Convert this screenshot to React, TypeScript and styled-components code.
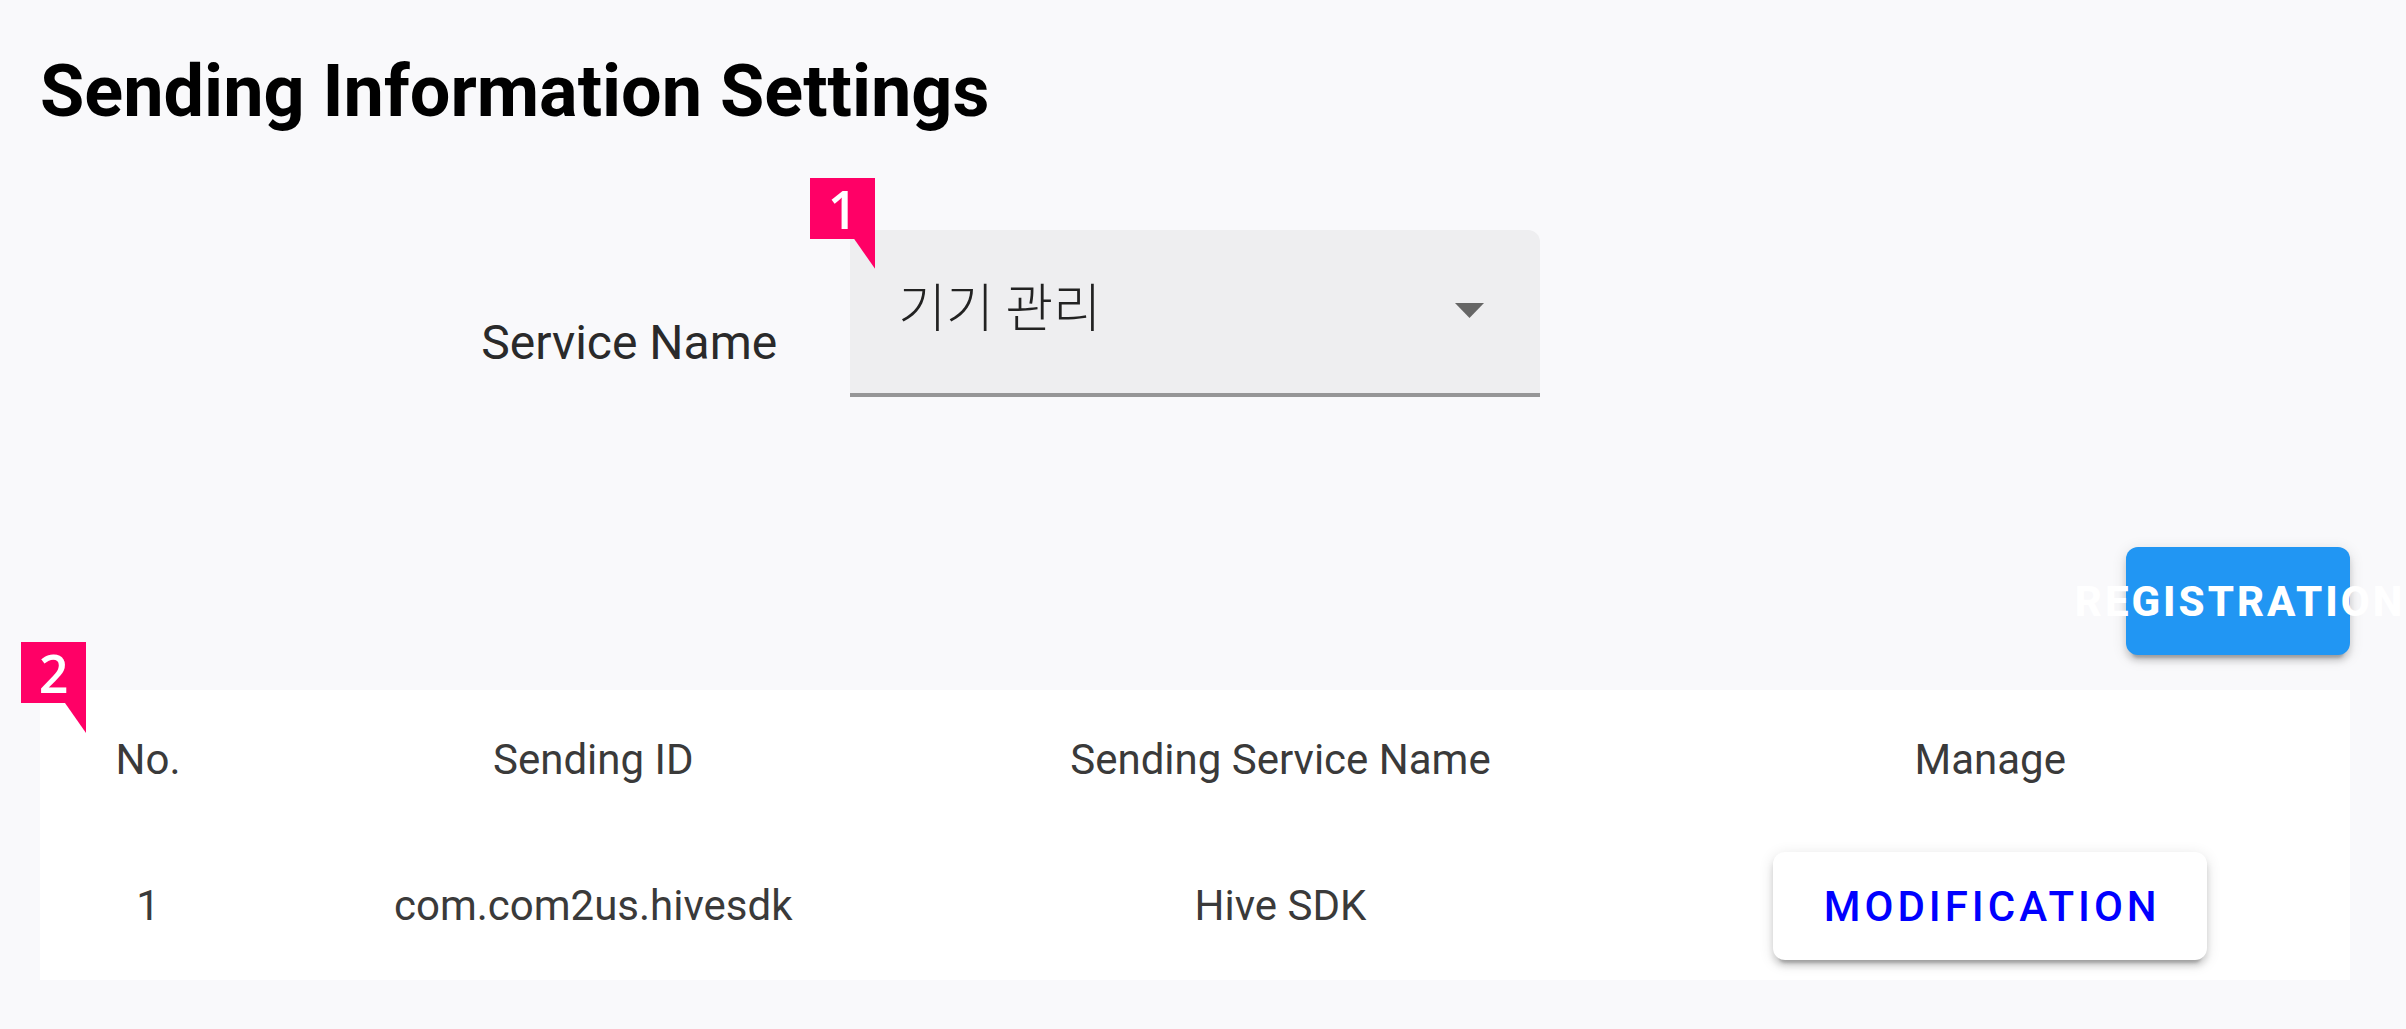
import React, { useState } from "react";
import styled, { createGlobalStyle } from "styled-components";

const GlobalStyle = createGlobalStyle`
  *, *::before, *::after { box-sizing: border-box; }
  body {
    margin: 0;
    background: #f9f9fb;
    color: #000;
    font-family: Roboto, "Noto Sans CJK KR", sans-serif;
  }
`;

const Page = styled.main`
  padding: 42px 56px 50px 40px;
`;

const Title = styled.h1`
  margin: 0;
  font-size: 72px;
  line-height: 100px;
  font-weight: 700;
`;

const FilterRow = styled.form`
  display: grid;
  grid-template-columns: 32% 690px;
  column-gap: 71px;
  align-items: end;
  margin-top: 88px;
`;

const FieldLabel = styled.label`
  padding: 0 2px 26px 0;
  text-align: right;
  font-size: 48px;
  line-height: 56px;
  color: #2a2a2a;
`;

const SelectBox = styled.div`
  position: relative;
  display: flex;
  align-items: center;
`;

const Select = styled.select`
  appearance: none;
  width: 100%;
  height: 167px;
  margin: 0;
  padding: 0 120px 14px 48px;
  border: 0;
  border-bottom: 4px solid #969697;
  border-radius: 12px 12px 0 0;
  background: #eeeef0;
  color: #222;
  font-family: "Noto Sans CJK KR", sans-serif;
  font-size: 52px;
  font-weight: 300;
`;

const Arrow = styled.svg`
  position: absolute;
  right: 56px;
  top: 73px;
  width: 29px;
  height: 15px;
  fill: #666;
  pointer-events: none;
`;

const Marker = styled.span<{ $left: number; $top: number }>`
  position: absolute;
  z-index: 1;
  left: ${(p) => p.$left}px;
  top: ${(p) => p.$top}px;
  width: 65px;
  height: 61px;
  background: #ff0066;
  color: #fff;
  font-family: "Open Sans", sans-serif;
  font-size: 52px;
  font-weight: 600;
  line-height: 62px;
  text-align: center;

  &::after {
    content: "";
    position: absolute;
    top: 100%;
    right: 0;
    width: 21px;
    height: 30px;
    background: inherit;
    clip-path: polygon(0 0, 100% 0, 100% 100%);
  }
`;

const Actions = styled.div`
  display: flex;
  justify-content: flex-end;
  margin-top: 150px;
`;

const Button = styled.button<{ $primary?: boolean }>`
  display: inline-flex;
  align-items: center;
  justify-content: center;
  width: ${(p) => (p.$primary ? "224px" : "434px")};
  height: 108px;
  padding: 0 0 0 4px;
  border: 0;
  border-radius: 12px;
  background: ${(p) => (p.$primary ? "#2196f3" : "#fff")};
  color: ${(p) => (p.$primary ? "#fff" : "#0000ff")};
  box-shadow: 0 9px 3px -6px rgba(0, 0, 0, 0.2), 0 6px 6px rgba(0, 0, 0, 0.14),
    0 3px 15px rgba(0, 0, 0, 0.12);
  font-family: inherit;
  font-size: 42px;
  font-weight: ${(p) => (p.$primary ? 800 : 500)};
  letter-spacing: ${(p) => (p.$primary ? "3px" : "4px")};
  text-transform: uppercase;
  white-space: nowrap;
  cursor: pointer;
`;

const TableBox = styled.section`
  position: relative;
  margin-top: 35px;
`;

const Table = styled.table`
  width: 100%;
  table-layout: fixed;
  border-collapse: collapse;
  background: #fff;
  color: #3a3a3a;
  font-size: 42px;
  line-height: 48px;
  text-align: center;
`;

const Column = styled.col<{ $width: string }>`
  width: ${(p) => p.$width};
`;

const HeadCell = styled.th`
  height: 142px;
  padding: 0 0 2px;
  font-weight: 400;
`;

const Cell = styled.td`
  height: 148px;
  padding: 0;
  vertical-align: middle;
`;

const rows = [{ no: 1, id: "com.com2us.hivesdk", service: "Hive SDK" }];

export default function App() {
  const [service, setService] = useState("device");

  return (
    <>
      <GlobalStyle />
      <Page>
        <Title>Sending Information Settings</Title>

        <FilterRow>
          <FieldLabel htmlFor="service">Service Name</FieldLabel>
          <SelectBox>
            <Marker $left={-40} $top={-52}>1</Marker>
            <Select
              id="service"
              value={service}
              onChange={(e) => setService(e.target.value)}
            >
              <option value="device">기기 관리</option>
            </Select>
            <Arrow viewBox="0 0 10 5" preserveAspectRatio="none" aria-hidden="true">
              <path d="M0 0h10L5 5z" />
            </Arrow>
          </SelectBox>
        </FilterRow>

        <Actions>
          <Button type="button" $primary>Registration</Button>
        </Actions>

        <TableBox>
          <Marker $left={-19} $top={-48}>2</Marker>
          <Table>
            <colgroup>
              <Column $width="9.35%" />
              <Column $width="29.2%" />
              <Column $width="30.3%" />
              <Column $width="31.15%" />
            </colgroup>
            <thead>
              <tr>
                <HeadCell scope="col">No.</HeadCell>
                <HeadCell scope="col">Sending ID</HeadCell>
                <HeadCell scope="col">Sending Service Name</HeadCell>
                <HeadCell scope="col">Manage</HeadCell>
              </tr>
            </thead>
            <tbody>
              {rows.map((row) => (
                <tr key={row.no}>
                  <Cell>{row.no}</Cell>
                  <Cell>{row.id}</Cell>
                  <Cell>{row.service}</Cell>
                  <Cell>
                    <Button type="button">Modification</Button>
                  </Cell>
                </tr>
              ))}
            </tbody>
          </Table>
        </TableBox>
      </Page>
    </>
  );
}
